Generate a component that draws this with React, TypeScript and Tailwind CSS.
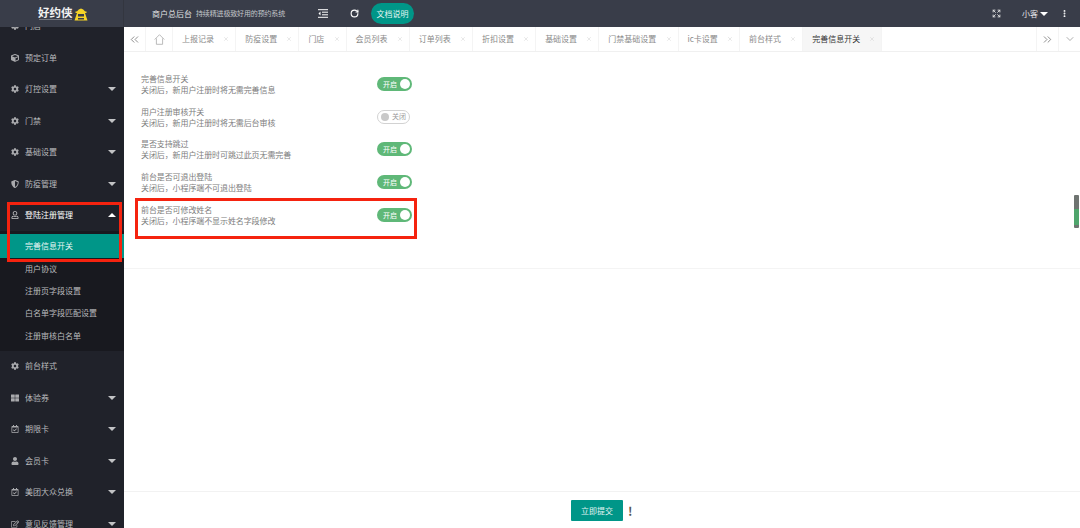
import React from 'react';
import { ChevronDown, ChevronsLeft, ChevronsRight, Expand, MoreVertical, RotateCw, X } from 'lucide-react';
import { FaCog, FaCube, FaUser, FaRegUser, FaRegEdit, FaRegCalendarCheck, FaThLarge, FaShieldAlt } from 'react-icons/fa';

const tabs = ['上报记录', '防疫设置', '门店', '会员列表', '订单列表', '折扣设置', '基础设置', '门禁基础设置', 'ic卡设置', '前台样式', '完善信息开关'];

const settings = [
  { title: '完善信息开关', desc: '关闭后，新用户注册时将无需完善信息', on: true },
  { title: '用户注册审核开关', desc: '关闭后，新用户注册时将无需后台审核', on: false },
  { title: '是否支持跳过', desc: '关闭后，新用户注册时可跳过此页无需完善', on: true },
  { title: '前台是否可退出登陆', desc: '关闭后，小程序端不可退出登陆', on: true },
  { title: '前台是否可修改姓名', desc: '关闭后，小程序端不显示姓名字段修改', on: true },
];

const Caret = ({ up }: { up?: boolean }) => (
  <span className={`ml-auto w-0 h-0 border-x-[4px] border-x-transparent ${up ? 'border-b-[4px] border-b-white' : 'border-t-[4px] border-t-[#c2c3c5]'}`} />
);

const MenuItem = ({ icon, label, caret = true }: { icon?: React.ReactNode; label: string; caret?: boolean }) => (
  <div className="h-[31.5px] flex items-center pl-[11px] pr-[8px] text-[8px] text-[#b9babd]">
    <span className="w-[14px] flex items-center">{icon}</span>
    <span>{label}</span>
    {caret && <Caret />}
  </div>
);

const Toggle = ({ on }: { on: boolean }) =>
  on ? (
    <div className="w-[35px] h-[14px] rounded-full bg-[#5fb878] flex items-center justify-between pl-[6px] pr-[2px] text-[7px] text-white">
      <span>开启</span>
      <span className="w-[10px] h-[10px] rounded-full bg-white" />
    </div>
  ) : (
    <div className="w-[33px] h-[14px] rounded-full border border-[#d2d2d2] bg-white flex items-center gap-[3px] pl-[3px] text-[7px] text-[#999]">
      <span className="w-[8px] h-[8px] rounded-full bg-[#c9c9c9]" />
      <span>关闭</span>
    </div>
  );

export default function App() {
  const iconCls = 'w-[8px] h-[8px] text-[#a9aaad]';
  return (
    <div className="relative w-[1080px] h-[528px] overflow-hidden bg-white flex flex-col font-['Noto_Sans_CJK_SC','Liberation_Sans',sans-serif]">
      <header className="relative z-10 h-[27px] shrink-0 bg-[#393d49] flex items-center text-white">
        <div className="w-[124px] shrink-0 h-full flex items-center pl-[38px] gap-[1px] border-r border-[#33363f]">
          <div className="flex flex-col items-center">
            <span className="text-[11.5px] font-bold text-[#f2f2f2] leading-none">好约侠</span>
            <span className="mt-[1px] h-[1px] w-[33px] bg-white/30" />
          </div>
          <svg width="14" height="15" viewBox="0 0 14 15">
            <path d="M2.5 6 Q7 -1 11.5 6 Z" fill="#f5d327" />
            <rect x="1.5" y="5.5" width="11" height="1.5" fill="#f5d327" />
            <path d="M3 7h8l2.5 7.5H.5z" fill="#f5d327" />
            <rect x="4" y="8" width="6" height="2.5" fill="#393d49" />
            <rect x="4" y="12" width="6" height="1.5" fill="#393d49" />
          </svg>
        </div>
        <span className="ml-[28px] text-[8px] text-[#e2e3e5]">商户总后台</span>
        <span className="ml-[4px] text-[7px] tracking-[-0.15px] text-[#c4c6ca]">持续精进极致好用的预约系统</span>
        <svg className="ml-[33px] w-[10px] h-[9px]" viewBox="0 0 10 9" fill="none" stroke="#fff">
          <path d="M0 .7h10M4 3.2h6M4 5.8h6M0 8.3h10" />
          <path d="M2.5 2.5 .5 4.5l2 2z" fill="#fff" stroke="none" />
        </svg>
        <RotateCw className="ml-[22px] w-[9px] h-[9px]" strokeWidth={3} />
        <button className="ml-[12px] w-[43px] h-[21px] rounded-full bg-[#009688] text-[8px] text-[#e6f5f3]">文档说明</button>
        <Expand className="ml-auto w-[9px] h-[9px] text-[#ddd]" strokeWidth={2.5} />
        <span className="ml-[21px] text-[8px] text-[#e2e3e5]">小客</span>
        <span className="ml-[2px] w-0 h-0 border-x-[4px] border-x-transparent border-t-[4px] border-t-white" />
        <MoreVertical className="ml-[12px] mr-[11px] w-[9px] h-[9px]" strokeWidth={3} />
      </header>

      <div className="flex-1 flex min-h-0">
        <aside className="w-[124px] shrink-0 bg-[#20222a] overflow-hidden">
          <div className="-mt-[16.5px]">
            <MenuItem icon={<FaCog className={iconCls} />} label="门店" caret={false} />
            <MenuItem icon={<FaCube className={iconCls} />} label="预定订单" caret={false} />
            <MenuItem icon={<FaCog className={iconCls} />} label="灯控设置" />
            <MenuItem icon={<FaCog className={iconCls} />} label="门禁" />
            <MenuItem icon={<FaCog className={iconCls} />} label="基础设置" />
            <MenuItem icon={<FaShieldAlt className={iconCls} />} label="防疫管理" />
            <div className="h-[31.5px] flex items-center pl-[11px] pr-[8px] text-[8px] text-white">
              <span className="w-[14px] flex items-center"><FaRegUser className="w-[8px] h-[8px] text-[#c9cacc]" /></span>
              <span>登陆注册管理</span>
              <Caret up />
            </div>
            <div className="bg-[#18191f] text-[8px] text-[#b9babd] pt-[3px] pb-[3.5px]">
              <div className="h-[23.5px] pl-[25px] flex items-center bg-[#009688] text-[#e9f6f4]">完善信息开关</div>
              <div className="h-[22.4px] pl-[25px] flex items-center">用户协议</div>
              <div className="h-[22.4px] pl-[25px] flex items-center">注册页字段设置</div>
              <div className="h-[22.4px] pl-[25px] flex items-center">白名单字段匹配设置</div>
              <div className="h-[22.4px] pl-[25px] flex items-center">注册审核白名单</div>
            </div>
            <MenuItem icon={<FaCog className={iconCls} />} label="前台样式" caret={false} />
            <MenuItem icon={<FaThLarge className={iconCls} />} label="体验券" />
            <MenuItem icon={<FaRegCalendarCheck className={iconCls} />} label="期限卡" />
            <MenuItem icon={<FaUser className={iconCls} />} label="会员卡" />
            <MenuItem icon={<FaRegCalendarCheck className={iconCls} />} label="美团大众兑换" />
            <MenuItem icon={<FaRegEdit className={iconCls} />} label="意见反馈管理" />
          </div>
        </aside>

        <main className="flex-1 min-w-0 flex flex-col">
          <nav className="h-[25px] shrink-0 flex items-stretch border-b border-[#f0f0f0] text-[8px] text-[#8a8a8a]">
            <div className="w-[22px] flex items-center justify-center border-r border-[#f4f4f4]">
              <ChevronsLeft className="w-[13px] h-[13px] text-[#555]" strokeWidth={1.2} />
            </div>
            <div className="w-[27px] flex items-center justify-center border-r border-[#f4f4f4]">
              <svg width="11" height="11" viewBox="0 0 11 11" fill="none" stroke="#aaa" strokeWidth="0.8">
                <path d="M.7 5.5 5.5.7l4.8 4.8M2.4 4.4v5.9h6.2V4.4" />
              </svg>
            </div>
            {tabs.map((t, i) => {
              const active = i === tabs.length - 1;
              return (
                <div key={t} className={`flex items-center pl-[9px] pr-[6px] gap-[9.2px] border-r border-[#f4f4f4] ${active ? 'bg-[#f6f6f6] text-[#333]' : ''}`}>
                  <span>{t}</span>
                  <X className="w-[6px] h-[6px] text-[#c2c2c2]" strokeWidth={1.5} />
                </div>
              );
            })}
            <div className="ml-auto w-[22px] flex items-center justify-center border-l border-[#f4f4f4]">
              <ChevronsRight className="w-[13px] h-[13px] text-[#555]" strokeWidth={1.2} />
            </div>
            <div className="w-[22px] flex items-center justify-center border-l border-[#f4f4f4]">
              <ChevronDown className="w-[12px] h-[12px] text-[#777]" strokeWidth={1.2} />
            </div>
          </nav>

          <div className="flex-1 min-h-0 flex flex-col">
            <div className="h-[217px] shrink-0 border-b border-[#f4f4f4] pt-[21px] pl-[17px]">
              {settings.map(s => (
                <div key={s.title} className="h-[32.7px] flex items-start">
                  <div className="w-[236px] text-[8px] leading-[11px] tracking-[-0.1px] text-[#7d7d7d]">
                    <p>{s.title}</p>
                    <p>{s.desc}</p>
                  </div>
                  <div className="mt-[4px]">
                    <Toggle on={s.on} />
                  </div>
                </div>
              ))}
            </div>
            <div className="flex-1" />
            <div className="h-[37px] shrink-0 border-t border-[#f2f2f2] flex items-center pl-[447px] pt-[1px]">
              <button className="w-[52px] h-[21px] bg-[#009688] text-[8px] text-[#e6f5f3] rounded-[1px]">立即提交</button>
              <span className="ml-[5px] text-[12px] font-bold text-[#555]">!</span>
            </div>
          </div>
        </main>
      </div>

      {/* 红色标注框 */}
      <div className="absolute left-[7px] top-[202px] w-[115px] h-[60px] border-[3px] border-[#f5230f]" />
      <div className="absolute left-[135px] top-[198px] w-[282px] h-[41px] border-[3px] border-[#f5230f]" />
      {/* 滚动条 */}
      <div className="absolute left-[1074px] top-[195px] w-[5px] h-[33px] rounded-[1px] bg-[#6f7471]">
        <div className="mt-[14px] h-[16px] bg-[#4fa56c]" />
      </div>
    </div>
  );
}
